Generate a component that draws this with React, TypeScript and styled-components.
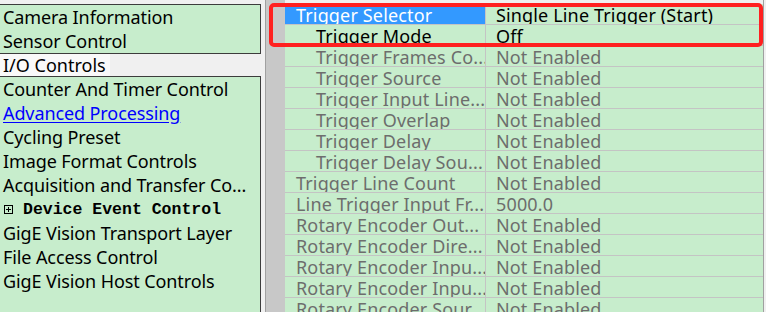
import * as React from 'react';
import styled, { createGlobalStyle } from 'styled-components';

const GlobalStyle = createGlobalStyle`
  html, body {
    margin: 0;
    padding: 0;
    background: #f0f0f0;
    overflow: hidden;
  }
`;

const GREEN = '#c7edcc';

const Screen = styled.div`
  display: flex;
  width: 766px;
  height: 312px;
  overflow: hidden;
  background: #f0f0f0;
  font-family: 'Noto Sans', 'Open Sans', sans-serif;
  font-size: 18px;
  color: #000;
`;

const Sidebar = styled.div`
  width: 261px;
  flex-shrink: 0;
  display: flex;
  flex-direction: column;
  padding-top: 4px;
  margin-right: 4px;
`;

const Group = styled.div<{ $open?: boolean }>`
  background: ${GREEN};
  border-top: 1px solid #3c3c3c;
  border-right: 1px solid #3c3c3c;
  border-bottom: ${(p) => (p.$open ? 'none' : '1px solid #3c3c3c')};
  flex: ${(p) => (p.$open ? 1 : 'none')};
`;

const NavItem = styled.div<{ $link?: boolean }>`
  height: 24px;
  line-height: 23px;
  padding-top: 1px;
  box-sizing: border-box;
  padding-left: 3px;
  white-space: nowrap;
  letter-spacing: -0.1px;
  color: ${(p) => (p.$link ? '#0000ff' : '#000')};
  text-decoration: ${(p) => (p.$link ? 'underline' : 'none')};
  text-underline-offset: 2px;
`;

const CurrentRow = styled.div`
  height: 22px;
  display: flex;
`;

const CurrentLabel = styled.span`
  line-height: 21px;
  padding: 1px 4px 0 3px;
  background: #f9f9f9;
  border-left: 1px solid #333;
  margin-left: -1px;
`;

const Category = styled.div`
  height: 24px;
  display: flex;
  align-items: center;
  padding-left: 4px;
  gap: 10px;
  font-family: 'Liberation Mono', monospace;
  font-weight: bold;
  font-size: 16.5px;
  white-space: nowrap;
`;

const PropertyPane = styled.div`
  width: 497px;
  flex-shrink: 0;
  display: flex;
  border-left: 1px solid #a0a0a0;
  border-right: 1px solid #a0a0a0;
  position: relative;
`;

const Gutter = styled.div`
  width: 19px;
  background: #c8c8c8;
`;

const Table = styled.div`
  flex: 1;
  padding-top: 4px;
`;

const Row = styled.div`
  display: grid;
  grid-template-columns: 201px 1fr;
  height: 21px;
  box-sizing: border-box;
  border-bottom: 1px solid #c4c4c4;
  background: ${GREEN};
`;

type RowState = 'selected' | 'active' | 'disabled';

const NameCell = styled.div<{ $level: number; $state: RowState }>`
  border-right: 1px solid #c4c4c4;
  padding-left: ${(p) => (p.$level === 2 ? 31 : 11)}px;
  padding-top: 2px;
  line-height: 18px;
  white-space: nowrap;
  overflow: hidden;
  letter-spacing: 0.15px;
  background: ${(p) => (p.$state === 'selected' ? '#3399ff' : 'transparent')};
  color: ${(p) =>
    p.$state === 'selected' ? '#fff' : p.$state === 'active' ? '#000' : '#6d6d6d'};
`;

const ValueCell = styled.div<{ $state: RowState }>`
  padding-left: 10px;
  padding-top: 2px;
  line-height: 18px;
  white-space: nowrap;
  overflow: hidden;
  letter-spacing: 0.15px;
  color: ${(p) => (p.$state === 'disabled' ? '#6d6d6d' : '#000')};
`;

const Highlight = styled.div`
  position: absolute;
  left: 3px;
  top: 3px;
  width: 494px;
  height: 44px;
  box-sizing: border-box;
  border: 4px solid #ff2020;
  border-radius: 5px;
  pointer-events: none;
`;

const ExpandIcon = () => (
  <svg width="9" height="9" viewBox="0 0 9 9">
    <rect x="0.5" y="0.5" width="8" height="8" fill="none" stroke="#000" />
    <path d="M2 4.5h5M4.5 2v5" stroke="#000" />
  </svg>
);

const rows: { name: string; value: string; level: number; state: RowState }[] = [
  { name: 'Trigger Selector', value: 'Single Line Trigger (Start)', level: 1, state: 'selected' },
  { name: 'Trigger Mode', value: 'Off', level: 2, state: 'active' },
  { name: 'Trigger Frames Co...', value: 'Not Enabled', level: 2, state: 'disabled' },
  { name: 'Trigger Source', value: 'Not Enabled', level: 2, state: 'disabled' },
  { name: 'Trigger Input Line...', value: 'Not Enabled', level: 2, state: 'disabled' },
  { name: 'Trigger Overlap', value: 'Not Enabled', level: 2, state: 'disabled' },
  { name: 'Trigger Delay', value: 'Not Enabled', level: 2, state: 'disabled' },
  { name: 'Trigger Delay Sou...', value: 'Not Enabled', level: 2, state: 'disabled' },
  { name: 'Trigger Line Count', value: 'Not Enabled', level: 1, state: 'disabled' },
  { name: 'Line Trigger Input Fr...', value: '5000.0', level: 1, state: 'disabled' },
  { name: 'Rotary Encoder Out...', value: 'Not Enabled', level: 1, state: 'disabled' },
  { name: 'Rotary Encoder Dire...', value: 'Not Enabled', level: 1, state: 'disabled' },
  { name: 'Rotary Encoder Inpu...', value: 'Not Enabled', level: 1, state: 'disabled' },
  { name: 'Rotary Encoder Inpu...', value: 'Not Enabled', level: 1, state: 'disabled' },
  { name: 'Rotary Encoder Sour...', value: 'Not Enabled', level: 1, state: 'disabled' },
];

const App: React.FunctionComponent = () => (
  <Screen>
    <GlobalStyle />
    <Sidebar>
      <Group>
        <NavItem>Camera Information</NavItem>
        <NavItem>Sensor Control</NavItem>
      </Group>
      <CurrentRow>
        <CurrentLabel>I/O Controls</CurrentLabel>
      </CurrentRow>
      <Group $open>
        <NavItem>Counter And Timer Control</NavItem>
        <NavItem $link>Advanced Processing</NavItem>
        <NavItem>Cycling Preset</NavItem>
        <NavItem>Image Format Controls</NavItem>
        <NavItem>Acquisition and Transfer Co...</NavItem>
        <Category>
          <ExpandIcon />
          Device Event Control
        </Category>
        <NavItem>GigE Vision Transport Layer</NavItem>
        <NavItem>File Access Control</NavItem>
        <NavItem>GigE Vision Host Controls</NavItem>
      </Group>
    </Sidebar>
    <PropertyPane>
      <Gutter />
      <Table>
        {rows.map((r, i) => (
          <Row key={i}>
            <NameCell $level={r.level} $state={r.state}>
              {r.name}
            </NameCell>
            <ValueCell $state={r.state}>{r.value}</ValueCell>
          </Row>
        ))}
      </Table>
      <Highlight />
    </PropertyPane>
  </Screen>
);

export default App;
